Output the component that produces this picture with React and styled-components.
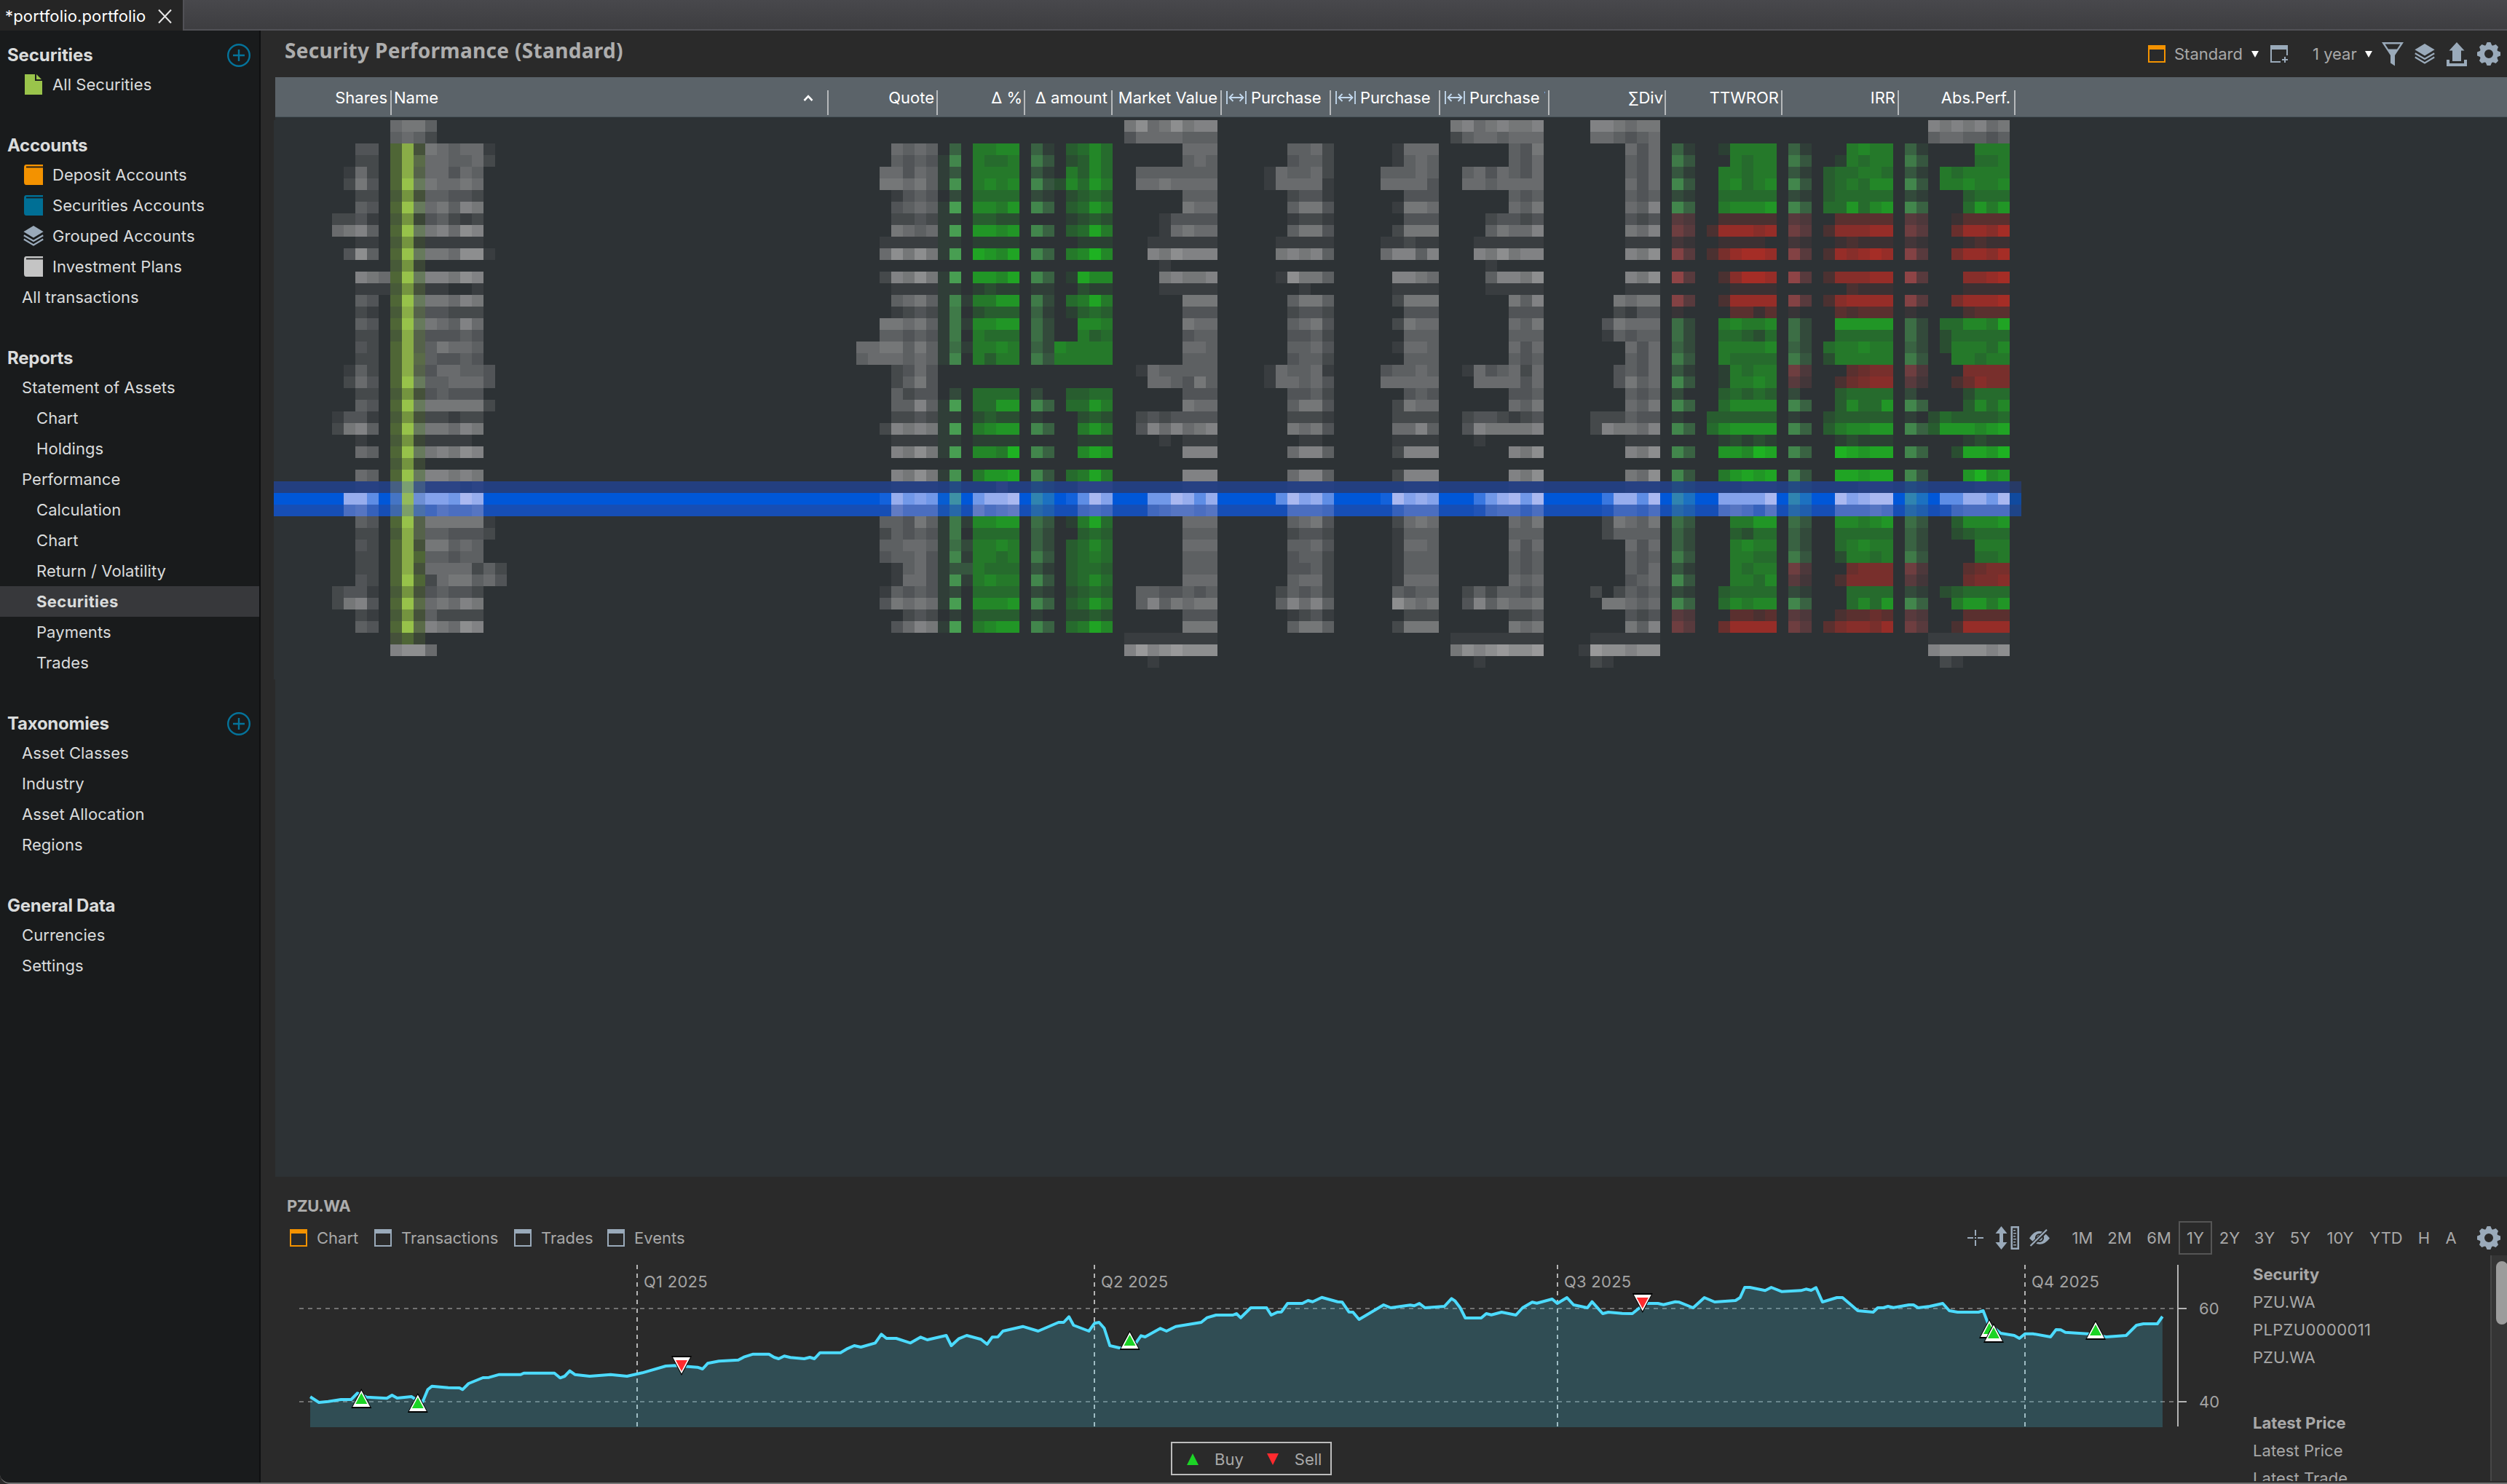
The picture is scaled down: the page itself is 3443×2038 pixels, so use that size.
import React from 'react';
import styled, { createGlobalStyle } from 'styled-components';

const GlobalStyle = createGlobalStyle`
  html, body { margin: 0; padding: 0; background: #2a2a2a; overflow: hidden; }
  * { box-sizing: border-box; }
`;

const slate = '#9aaaba';
const orange = '#f39200';

/* ---------- frame ---------- */
const Window = styled.div`
  width: 3443px;
  height: 2038px;
  display: flex;
  flex-direction: column;
  overflow: hidden;
  background: #2a2a2a;
  border-bottom: 2px solid #737373;
  border-bottom-left-radius: 14px;
  font-family: Inter, "Noto Sans", sans-serif;
  font-size: 22px;
  line-height: 1;
  color: #a8a8a8;
  white-space: nowrap;
`;
const TabBar = styled.div`
  height: 42px;
  flex: none;
  display: flex;
  background: linear-gradient(#48484c, #3d3d40);
`;
const TabFiller = styled.div`
  flex: 1;
  border-bottom: 2px solid #515156;
  border-left: 2px solid #515156;
`;
const Tab = styled.div`
  width: 251px;
  display: flex;
  align-items: center;
  padding: 2px 15px 0 7px;
  justify-content: space-between;
  letter-spacing: 0.15px;
  background: #252525;
  color: #fff;
`;
const Body = styled.div`
  flex: 1;
  min-height: 0;
  display: flex;
`;

/* ---------- sidebar ---------- */
const Sidebar = styled.nav`
  width: 358px;
  flex: none;
  background: #191b1c;
  border-right: 2px solid #0f1011;
  color: #dadcdc;
`;
const Heading = styled.div`
  height: ${(p) => (p.$first ? 53 : 82)}px;
  display: flex;
  align-items: flex-end;
  justify-content: space-between;
  padding: 0 11px 2px 10px;
  font-size: 24px;
  font-weight: 700;
  letter-spacing: ${(p) => (p.$first ? -0.1 : -0.25)}px;
  line-height: 34px;
  svg { display: block; }
`;
const Item = styled.div`
  height: 42px;
  display: flex;
  align-items: center;
  padding-left: ${(p) => (p.$icon ? 32 : p.$level === 2 ? 50 : 30)}px;
  background: ${(p) => (p.$active ? '#37383b' : 'transparent')};
  font-weight: ${(p) => (p.$active ? 700 : 400)};
  letter-spacing: ${(p) => (p.$active ? 0.4 : 0.06)}px;
`;
const ItemIcon = styled.span`
  width: 40px;
  height: 28px;
  svg { display: block; }
`;

/* ---------- main ---------- */
const Main = styled.main`
  flex: 1;
  min-width: 0;
  display: flex;
  flex-direction: column;
  padding-left: 20px;
`;
const TitleBar = styled.header`
  height: 64px;
  flex: none;
  display: flex;
  align-items: center;
  justify-content: space-between;
  padding-left: 13px;
`;
const Title = styled.h1`
  margin: 0 0 10px;
  font-family: "Noto Sans", sans-serif;
  font-size: 28px;
  font-weight: 700;
  line-height: 40px;
  letter-spacing: 0.32px;
  color: #adadad;
`;
const Tools = styled.div`
  display: flex;
  align-items: center;
  height: 64px;
  padding-right: 9px;
  svg { display: block; flex: none; }
`;
const Slot = styled.div`
  width: ${(p) => p.$w}px;
  flex: none;
  display: flex;
  align-items: center;
  justify-content: flex-start;
`;
const TableHead = styled.div`
  height: 55px;
  flex: none;
  display: flex;
  background: #5b6369;
  border-bottom: 1px solid #49545a;
  color: #fff;
`;
const Th = styled.div`
  width: ${(p) => p.$w}px;
  height: 34px;
  margin-top: 18px;
  flex: none;
  display: flex;
  justify-content: ${(p) => (p.$sorted ? 'space-between' : 'flex-end')};
  padding: ${(p) => (p.$sorted ? '0 19px 0 3px' : `0 ${p.$end || 3}px 0 6px`)};
  border-right: 2px solid #b6b9bb;
  line-height: 21px;
  svg { flex: none; margin-top: ${(p) => (p.$sorted ? 6 : 0)}px; }
`;
const ThText = styled.span`
  flex: none;
`;
const ThClipped = styled.span`
  flex: 1;
  min-width: 0;
  height: 32px;
  padding-left: 6px;
  margin-right: 1px;
  overflow: hidden;
  letter-spacing: -0.1px;
`;
const TableBody = styled.div`
  height: 1455px;
  flex: none;
  padding-top: 4px;
  background: #2d3235;
`;
const Mosaic = styled.div`
  width: 2402px;
  height: 768px;
  margin-left: -2px;
  background: #2d3235;
`;
const MosaicRow = styled.div`
  display: flex;
  height: 16px;
`;
const Run = styled.span`
  flex: none;
  height: 16px;
`;

/* ---------- lower pane ---------- */
const PaneTitle = styled.div`
  height: 60px;
  flex: none;
  padding: 29px 0 0 16px;
  font-weight: 700;
  letter-spacing: -0.3px;
  color: #adadad;
`;
const PaneBar = styled.div`
  height: 48px;
  flex: none;
  display: flex;
  justify-content: space-between;
  align-items: center;
  padding-left: 20px;
`;
const ViewTabs = styled.div`
  display: flex;
  align-items: center;
  svg { display: block; flex: none; margin-right: 13px; }
`;
const Range = styled.div`
  width: ${(p) => p.$w}px;
  height: 46px;
  flex: none;
  display: flex;
  align-items: center;
  justify-content: center;
  border: 2px solid ${(p) => (p.$active ? '#555' : 'transparent')};
`;
const PaneBody = styled.div`
  flex: 1;
  min-height: 0;
  display: flex;
`;
const ChartArea = styled.div`
  width: 2696px;
  flex: none;
  display: flex;
  flex-direction: column;
  svg { display: block; }
`;
const Legend = styled.div`
  width: 221px;
  height: 46px;
  margin: 10px 0 0 1230px;
  display: flex;
  align-items: center;
  padding: 2px 0 0 20px;
  border: 2px solid #bcbcbc;
  span:nth-of-type(1) { margin: 0 32px 0 22px; }
  span:nth-of-type(2) { margin-left: 22px; }
`;
const Info = styled.div`
  flex: 1;
  padding: 7px 0 0 20px;
  overflow: hidden;
  height: 310px;
`;
const InfoRow = styled.div`
  height: ${(p) => p.$h || 38}px;
  line-height: 38px;
  font-weight: ${(p) => (p.$bold ? 700 : 400)};
  letter-spacing: ${(p) => p.$track || 0.05}px;
`;
const ScrollTrack = styled.div`
  width: 23px;
  height: 310px;
  padding: 8px 0 0 6px;
  background: #353535;
  border-left: 2px solid #474747;
  overflow: hidden;
`;
const ScrollThumb = styled.div`
  width: 16px;
  height: 87px;
  border-radius: 8px;
  background: #9c9c9c;
`;

/* ---------- icons ---------- */
const PlusCircle = () => (
  <svg width="34" height="34" viewBox="0 0 34 34" fill="none" stroke="#05739a" strokeWidth="2.4">
    <circle cx="17" cy="17" r="14.8" />
    <path d="M17 9v16M9 17h16" />
  </svg>
);
const FileIcon = () => (
  <svg width="28" height="28" viewBox="0 0 28 28" fill="#9ac44b">
    <path d="M2 0h14v9h10v19H2z" />
    <path d="M18 0l7 7h-7z" />
  </svg>
);
const BookIcon = ({ color }) => (
  <svg width="28" height="28" viewBox="0 0 28 28">
    <path d="M4 0h23v28H4q-3 0-3-4V4q0-4 3-4z" fill={color} />
    <path d="M4 3.400h23" stroke="#191b1c" strokeWidth="1.8" />
  </svg>
);
const LayersIcon = () => (
  <svg width="28" height="28" viewBox="0 0 28 28" fill="none" stroke={slate} strokeWidth="2.3">
    <path d="M14 0l13.600 8.200L14 16.400.400 8.200z" fill={slate} stroke="none" />
    <path d="M.800 13.200L14 21l13.200-7.800M.800 18.600L14 26.400l13.200-7.800" />
  </svg>
);
const CloseIcon = () => (
  <svg width="19" height="21" viewBox="0 0 19 21" stroke="#e6e6e6" strokeWidth="2">
    <path d="M1 1.500l17 18M18 1.500l-17 18" />
  </svg>
);
const PaneIcon = ({ color = slate }) => (
  <svg width="24" height="24" viewBox="0 0 24 24">
    <path d="M0 0h24v24H0zM2 6v16h20V6z" fill={color} fillRule="evenodd" />
  </svg>
);
const PaneAddIcon = () => (
  <svg width="25" height="25" viewBox="0 0 25 25" fill={slate}>
    <path d="M0 0h24v14h-2V6H2v16h12v2H0z" />
    <path d="M19 16h2v3h3v2h-3v3h-2v-3h-3v-2h3z" />
  </svg>
);
const Caret = () => (
  <svg width="10" height="9" viewBox="0 0 10 9"><path d="M0 0h10L5 9z" fill="#fff" /></svg>
);
const FunnelIcon = () => (
  <svg width="30" height="33" viewBox="0 0 30 33">
    <path d="M0 0h30L18 18v14.500l-6-4V18zM4.500 2.600L9 9.500h12l4.500-6.900z" fill={slate} fillRule="evenodd" />
  </svg>
);
const ExportIcon = () => (
  <svg width="28" height="33" viewBox="0 0 28 33" fill={slate}>
    <path d="M14 0l10.500 11.500H20V26H8V11.500H3.500z" />
    <path d="M0 24h4v5h20v-5h4v9H0z" />
  </svg>
);
const teeth = [0, 45, 90, 135, 180, 225, 270, 315];
const GearIcon = () => (
  <svg width="32" height="32" viewBox="-16 -16 32 32">
    <circle r="9.300" fill="none" stroke={slate} strokeWidth="6.600" />
    {teeth.map((a) => (
      <path key={a} d="M-4.600 -11L-2.400 -16H2.400L4.600 -11z" fill={slate} transform={`rotate(${a})`} />
    ))}
  </svg>
);
const CrossIcon = () => (
  <svg width="22" height="22" viewBox="0 0 22 22" stroke={slate} strokeWidth="2">
    <path d="M11 0v8M11 14v8M0 11h8M14 11h8M10 11h2" />
  </svg>
);
const RulerIcon = () => (
  <svg width="33" height="32" viewBox="0 0 33 32" fill={slate}>
    <path d="M8.500 0l8 10H11v12h5.500l-8 10-8-10H6V10H.500z" />
    <path d="M21.500 0H33v32H21.500zM24 2.500v27h6.500v-27z" fillRule="evenodd" />
    <path d="M25 5h3v1.500h-3zM25 9h4v1.500h-4zM25 13h3v1.500h-3zM25 17h4v1.500h-4zM25 21h3v1.500h-3zM25 25h4v1.500h-4z" />
  </svg>
);
const EyeOffIcon = () => (
  <svg width="30" height="24" viewBox="0 0 30 24">
    <path d="M1 12.500Q14 -7 29 12.500Q16 29 1 12.500z" fill={slate} />
    <circle cx="15" cy="12" r="5" fill="none" stroke="#2a2a2a" strokeWidth="2.200" />
    <path d="M2.500 23.500L25.500 1" stroke="#2a2a2a" strokeWidth="5.500" />
    <path d="M2.500 23L25 .800" stroke={slate} strokeWidth="2.200" />
  </svg>
);
const SpanIcon = () => (
  <svg width="28" height="20" viewBox="0 0 28 20" fill="none" stroke="#c3d9ee" strokeWidth="1.800">
    <path d="M1 1v18M27 1v18M4.500 10h19M9.500 5l-5 5 5 5M18.500 5l5 5-5 5" />
  </svg>
);
const SortIcon = () => (
  <svg width="14" height="9" viewBox="0 0 14 9" fill="none" stroke="#fff" strokeWidth="2.600">
    <path d="M1.500 8L7 2.200 12.500 8" />
  </svg>
);

/* ---------- redacted table cells ---------- */
const BASE = [45, 50, 53];
const TONES = {
  n: [153, 153, 154],
  g: [30, 178, 34],
  r: [180, 44, 36],
  a: [72, 158, 82],
  b: [142, 68, 70],
};
const SELECTED = {
  31: { bg: [35, 63, 128], n: [75, 85, 155], a: [40, 115, 140] },
  32: { bg: [0, 87, 216], n: [170, 184, 240], a: [62, 145, 165] },
  33: { bg: [22, 78, 181], n: [118, 136, 200], a: [52, 125, 158] },
};
const STRIP = {
  p: '#4f6636', q: '#475a38', s: '#97c24a', u: '#89ad47', t: '#74943f', w: '#677a5c',
  x: '#3b4636', y: '#55624a', z: '#45513a', v: '#5a6b48',
  A: '#465f82', B: '#7a9f72', C: '#405a85', D: '#4575c5', E: '#93ba5c', F: '#6d8fd4',
  G: '#3f68aa', H: '#7c9f68', I: '#4a70aa',
};
const split = (text) => text.trim().split(/\s+/);

const arrowRows = split(`00 00 41 63 31 73 21 74 43 64 21 84 00 94 00 84 10 52 52 42 63 31 73 20 74 10 74 00
  74 00 73 21 74 53 53 42 42 63 31 73 21 74 43 64 00 00 00`);
const patch = (rows, changes) => rows.map((row, i) => changes[i] || row);
const arrowAmountRows = patch(arrowRows, {
  8: '00', 9: '74', 10: '00', 11: '74', 13: '74', 14: '11', 15: '62', 16: '41', 21: '00', 22: '00',
  42: '10', 43: '74',
});
const arrowIrrRows = patch(arrowRows, { 21: '63', 22: '42', 38: '63', 39: '42' });

const sections = [
  { at: 5, rows: split(`00000 00000 00330 00220 01520 02630 00220 00430 22310 56740 00110 03840 00000 00765 00111 00430
    00210 00430 00220 00320 00220 01420 02530 00220 00430 13310 26740 00100 00540 00000 00540 00110 08850 05630 00430
    00220 00320 00220 00220 00320 23310 26730 00210 00430 00000 00000 00000`) },
  { at: 10, rows: split(`566 454 puz puv puy psw qtz psw qtx psw qtx psw qtx psw qtz psw quy psw quy puy puv puy psw qtz
    psw qtz psw qtx psw qtx psw ABC DEF GHI psy quy puz pup puz psp qtz psv qtz psv zpx 788 000`) },
  { at: 13, rows: split(`4000000 2000000 6545510 5544520 5535400 6556500 4433200 5647600 3421200 6758700 1111100 6658810
    0000000 7768700 1100100 6657600 3322200 6547500 3334300 4655400 4334300 3554430 4455530 3433300 6666620 2212200
    6657600 1111000 6768700 0000000 7767600 2221200 7769800 4655600 6666610 4433320 6645400 4434400 5555242 2566453
    3433200 5657600 4222200 7658700 0000000 5000000 0000000`) },
  { at: 50, rows: split(`0 0 0005454 0004343 0055354 0066564 0001343 0003454 0002232 0006545 0011111 0058686 0 0027686
    0001111 0004564 0001232 0066564 0044343 5566464 4555454 0002353 0002463 0004233 0004474 0002232 0027676 0001111
    0007686 0 0007686 0001111 0018676 0007555 0044364 0024343 0044554 0034453 0001453 0001553 0014343 0036565 0000232
    0003576 0 0 0`) },
  { at: 57, tone: 'a', rows: split(`000 000 040 170 130 180 020 190 110 190 110 190 000 190 110 171 160 161 160 151 170
    000 000 020 190 110 190 110 190 000 180 020 190 150 161 160 152 171 133 181 120 190 010 190 000 000 000`) },
  { at: 60, tone: 'g', rows: split(`0 0 5566 5445 5555 5656 4444 6657 3322 7767 1111 8768 0 7768 1211 5577 2333 6677
    5444 5565 5355 0 0 4444 4477 2322 5677 1111 6659 0 5778 0020 6889 7567 6677 4444 5565 5545 5444 5655 4444 6667
    3333 5677 0 0 0`) },
  { at: 65, tone: 'a', rows: arrowAmountRows },
  { at: 67, tone: 'g', rows: split(`0 0 03464 02364 05364 26475 02343 03475 01232 03485 00111 05696 0 01866 00211 04585
    01343 00665 00534 65555 55555 0 0 03344 04475 00232 00575 00111 00687 0 04585 00222 01597 00454 01584 00343 03464
    03454 03443 03464 02343 03475 02232 04586 0 0 0`) },
  { at: 73, rows: split(`68568677 35555444 00000555 00000454 04444444 05565555 00000444 00000655 00013333 00015655
    00111111 00768777 00010000 00067667 00011111 00000666 00000333 00000655 00000344 00000554 00000444 01544444
    00554364 00000333 00000655 02323333 03757567 00010111 00000777 0 00000777 00000111 00669858 00456656 00000555
    00000444 00000555 00000444 00000444 00000555 04433434 04746566 00000333 00000666 11111111 79789888 00100000`) },
  { at: 85, rows: split(`0 0 004452 003442 154452 155551 002331 004663 001221 004663 011111 067674 0 018664 000100
    004664 002332 004563 003342 004453 003442 154451 155453 003342 004663 002221 006563 000110 005774 0 005774 001111
    059785 005554 004563 002332 004453 003442 003342 004552 024342 047574 001231 004664 0 0 0`) },
  { at: 95, rows: split(`0 0 01555 01454 44454 55553 00333 01665 00333 02666 11211 57747 0 07765 01111 02666 00333
    02655 00444 01554 00444 34454 55555 00343 02655 02222 05574 01111 02777 0 02777 00111 19787 03555 02565 01444
    01554 01444 01444 01555 04344 08656 00222 02666 0 0 0`) },
  { at: 101, rows: split(`67567667 24554555 00000436 00000435 04535435 05545555 00000434 00000546 00023323 00046557
    00111111 00768677 00010000 00047768 00011111 00000647 00000333 00000546 00000444 00000535 00000434 01534525
    00555535 00000334 00000546 02332123 03766667 00100000 00000768 0 00000768 00000111 00368969 00145535 00000546
    00000444 00000535 00000434 00000434 00000545 02424434 03746556 00000223 00000656 11111111 68789889 00100000`) },
  { at: 112, rows: split(`0776566 0554345 0000535 0000435 0000435 0000535 0000434 0000547 0000323 0000657 0000111
    0000768 0 0000768 0000111 0006566 0002133 0036555 0014344 0000535 0000435 0003435 0003645 0000434 0000546 0222433
    0276657 0000111 0000768 0 0000658 0000111 0038859 0014435 0026546 0024444 0000535 0000434 0000435 0000345 0202434
    0066545 0000323 0000647 0111111 1988788 0210000`) },
  { at: 120, tone: 'a', rows: arrowRows },
  { at: 123, tone: 'g', rows: split(`0 0 015555 005455 055455 056456 044444 056667 022222 277767 011110 257887 0 026887
    001111 027777 003313 056556 044324 055556 054444 015455 015565 034343 046666 333333 467777 012121 077698 0 057878
    000111 077779 056536 005577 003244 005655 005544 005455 005546 034444 046566 003323 047777 0 0 0`) },
  { at: 130, tone: 'a', rows: arrowIrrRows },
  { at: 133, tone: 'g', rows: split(`0 0 005655 015455 344554 345466 344444 447467 033333 266677 012111 276787 0 266677
    002111 267777 032333 077777 044444 455655 255555 003455 024566 034444 036447 233333 356677 012111 098788 0 088788
    000111 097899 055565 066567 044444 045655 025545 004555 025555 004444 004647 023343 356657 0 0 0`) },
  { at: 140, tone: 'a', rows: arrowIrrRows },
  { at: 142, tone: 'g', rows: split(`7676756 4554434 0000555 0000445 0545555 0556556 0003444 0004757 0013333 0047768
    0001211 0057768 0 0006678 0001111 0057778 0002333 0446658 0244444 0255546 0055455 0005555 0024655 0002444 0003646
    2433334 3777678 0001211 0028879 0 0007967 0000111 0558869 0145555 0036667 0023444 0000555 0000445 0003455 0004556
    0234444 0057757 0003333 0027777 1111111 7888878 0210000`) },
];

/* rows drawn in red in every performance column, and those red only in IRR and Abs.Perf. */
const LOSS_ALWAYS = [8, 9, 10, 11, 12, 13, 14, 15, 16, 42, 43];
const LOSS_LATE = [21, 22, 38, 39];
const toneOf = (section, row) => {
  const t = section.tone || 'n';
  if (t === 'n') return 'n';
  if (t === 'g' && (row < 2 || row > 43 || SELECTED[row])) return 'n';
  if (section.at < 120 || SELECTED[row]) return t;
  const loss = LOSS_ALWAYS.includes(row) || (section.at >= 130 && LOSS_LATE.includes(row));
  return loss ? (t === 'g' ? 'r' : 'b') : t;
};
const rgb = (c) => `rgb(${c.map(Math.round).join(',')})`;
const blend = (from, to, k) => from.map((v, i) => v + (to[i] - v) * k);

const mosaicRows = Array.from({ length: 47 }, (_, row) => {
  const sel = SELECTED[row];
  const bg = sel ? sel.bg : BASE;
  const cells = Array(150).fill(rgb(bg));
  sections.forEach((section) => {
    const text = section.rows[row] || '';
    if (text === '0') return;
    const tone = toneOf(section, row);
    const target = (sel && sel[tone]) || TONES[tone];
    [...text].forEach((ch, i) => {
      if (ch === '0') return;
      cells[section.at + i] = /\d/.test(ch) ? rgb(blend(bg, target, Number(ch) / 9)) : STRIP[ch];
    });
  });
  if (sel) cells[149] = rgb(blend(BASE, sel.bg, 0.65));
  const runs = [];
  cells.forEach((color) => {
    const last = runs[runs.length - 1];
    if (last && last.color === color) last.n += 1;
    else runs.push({ color, n: 1 });
  });
  return runs;
});

/* ---------- price chart ---------- */
const traces = [
  { x: -8, s: 1.4255, d: `80,955 97,978 115,974 140,966 160,966 172,940 180,945 190,956 230,961 240,948 250,960 278,954 290,970
    300,975 310,925 318,911 350,917 372,918 378,925 390,900 418,876 430,875 450,863 492,863 498,857 558,857 569,877
    578,870 588,848 598,863 627,870 668,863 700,870 719,861 730,856 776,828 795,826 820,830 838,833 848,840 858,817
    880,808 918,803 930,790 947,779 978,779 988,792 997,798 1008,787 1020,793 1047,798 1058,792 1067,798 1078,773
    1118,773 1130,758 1145,744 1158,750 1186,733 1198,697 1208,714 1227,714 1255,733 1275,709 1288,720 1325,702
    1335,744 1350,715 1365,702 1393,718 1405,738 1415,709 1426,708 1436,684 1475,665 1505,684 1545,648 1555,648` },
  { x: 1022, s: 1.4255, d: `97,625 106,660 136,684 147,652 156,648 166,672 177,744 200,755 215,745 228,733 238,703 246,708
    276,673 288,684 306,665 356,648 367,629 385,618 418,618 425,612 433,629 453,588 484,588 493,618 505,606 513,605
    525,570 554,570 565,558 574,563 592,545 623,563 632,565 645,605 653,606 665,636 713,576 727,588 765,577 773,580
    783,570 794,588 832,582 846,550 853,560 863,588 873,630 904,630 914,612 924,617 944,606 972,618 985,588 1004,565
    1013,569 1043,552 1053,570 1072,546 1085,576 1112,588 1121,563 1142,612 1153,606 1180,611 1200,612 1212,592
    1225,570 1250,570 1261,575 1284,563 1292,565 1319,588 1341,546 1361,564 1402,558 1411,546 1420,504 1430,504
    1460,517 1472,504 1492,521 1530,517 1540,511 1550,516` },
  { x: 2065, s: 1.568, d: `80,505 94,564 125,546 137,546 170,600 203,606 213,588 225,588 235,582 247,587 280,576 290,576
    300,588 325,582 353,570 367,600 385,606 430,606 440,600 450,650 478,693 507,702 518,714 530,695 547,695 585,708
    597,678 607,679 617,689 665,695 705,708 748,702 770,660 785,654 815,654 826,624` },
];
const points = traces.flatMap(({ x, s, d }) =>
  split(d).map((pair) => {
    const [px, py] = pair.split(',').map(Number);
    return `${(x + px / s).toFixed(1)},${(py / 3 - 124).toFixed(1)}`;
  }));
const quarters = [[497, 'Q1 2025'], [1125, 'Q2 2025'], [1761, 'Q3 2025'], [2403, 'Q4 2025']];
const trades = [
  ['buy', 118.3, 183], ['buy', 195.8, 189], ['sell', 558, 138], ['buy', 1173.5, 103],
  ['sell', 1877.8, 52], ['buy', 2354, 87], ['buy', 2360, 93], ['buy', 2500, 89],
];
const Marker = ({ kind, x, y }) => (
  <g transform={`translate(${x} ${y})${kind === 'sell' ? ' translate(0 27) scale(1 -1)' : ''}`}>
    <path d="M0 0L14 27H-14z" fill="#000" />
    <path d="M0 2.500L12 25H-12z" fill="#fff" />
    <path d="M0 6L8 21H-8z" fill={kind === 'sell' ? '#ff2a2e' : '#1cd426'} />
  </g>
);
const PriceChart = () => (
  <svg width="2696" height="246" viewBox="0 0 2696 246" fontFamily="Inter, sans-serif" fontSize="22" fill="#a4a4a4">
    <g stroke="#727272" strokeWidth="2" strokeDasharray="6 6">
      <path d="M33 73H2612M33 201H2612" />
    </g>
    {quarters.map(([x, label]) => (
      <g key={label}>
        <path d={`M${x} 13V235`} stroke="#b4b4b4" strokeWidth="2" strokeDasharray="6 6" />
        <text x={x + 9} y="44" letterSpacing="0.25">{label}</text>
      </g>
    ))}
    <polygon points={`48,236 ${points.join(' ')} 2592,236`} fill="rgb(77,219,255)" fillOpacity="0.2" />
    <polyline points={points.join(' ')} fill="none" stroke="#4cdbff" strokeWidth="4" strokeLinejoin="round" />
    {trades.map(([kind, x, y]) => <Marker key={x} kind={kind} x={x} y={y} />)}
    <path d="M2613 13V235M2614 73H2625M2614 201H2625" stroke="#b4b4b4" strokeWidth="2" />
    <text x="2642" y="81">60</text>
    <text x="2642" y="209">40</text>
  </svg>
);

/* ---------- content ---------- */
const nav = [
  { title: 'Securities', plus: true, items: [{ t: 'All Securities', icon: <FileIcon /> }] },
  { title: 'Accounts', items: [
    { t: 'Deposit Accounts', icon: <BookIcon color="#f39200" /> },
    { t: 'Securities Accounts', icon: <BookIcon color="#006f95" /> },
    { t: 'Grouped Accounts', icon: <LayersIcon /> },
    { t: 'Investment Plans', icon: <BookIcon color="#c4c4c4" /> },
    { t: 'All transactions' },
  ] },
  { title: 'Reports', items: [
    { t: 'Statement of Assets' }, { t: 'Chart', level: 2 }, { t: 'Holdings', level: 2 },
    { t: 'Performance' }, { t: 'Calculation', level: 2 }, { t: 'Chart', level: 2 },
    { t: 'Return / Volatility', level: 2 }, { t: 'Securities', level: 2, active: true },
    { t: 'Payments', level: 2 }, { t: 'Trades', level: 2 },
  ] },
  { title: 'Taxonomies', plus: true, items: [
    { t: 'Asset Classes' }, { t: 'Industry' }, { t: 'Asset Allocation' }, { t: 'Regions' },
  ] },
  { title: 'General Data', items: [{ t: 'Currencies' }, { t: 'Settings' }] },
];
const columns = [
  { t: 'Shares', w: 160, end: 4 }, { t: 'Name', w: 600, sorted: true }, { t: 'Quote', w: 150 },
  { t: 'Δ %', w: 120, end: 2 }, { t: 'Δ amount', w: 120, end: 5 }, { t: 'Market Value', w: 150, end: 4 },
  { t: 'Purchase Price', w: 150, span: true }, { t: 'Purchase Price', w: 150, span: true },
  { t: 'Purchase Value', w: 150, span: true }, { t: '∑Div', w: 160, end: 2 }, { t: 'TTWROR', w: 160 },
  { t: 'IRR', w: 160 }, { t: 'Abs.Perf.', w: 160, end: 5 },
];
const ranges = [['1M', 48], ['2M', 54], ['6M', 54], ['1Y', 46], ['2Y', 48], ['3Y', 48], ['5Y', 50],
  ['10Y', 60], ['YTD', 66], ['H', 38], ['A', 36]];

export default function App() {
  return (
    <>
      <GlobalStyle />
      <Window>
        <TabBar>
          <Tab><span>*portfolio.portfolio</span><CloseIcon /></Tab>
          <TabFiller />
        </TabBar>
        <Body>
          <Sidebar>
            {nav.map((group, i) => (
              <React.Fragment key={group.title}>
                <Heading $first={i === 0}><span>{group.title}</span>{group.plus && <PlusCircle />}</Heading>
                {group.items.map((item, k) => (
                  <Item key={k} $icon={!!item.icon} $level={item.level} $active={item.active}>
                    {item.icon && <ItemIcon>{item.icon}</ItemIcon>}
                    {item.t}
                  </Item>
                ))}
              </React.Fragment>
            ))}
          </Sidebar>
          <Main>
            <TitleBar>
              <Title>Security Performance (Standard)</Title>
              <Tools>
                <Slot $w={36}><PaneIcon color={orange} /></Slot>
                <Slot $w={106}>Standard</Slot>
                <Slot $w={26}><Caret /></Slot>
                <Slot $w={58}><PaneAddIcon /></Slot>
                <Slot $w={72}>1 year</Slot>
                <Slot $w={23}><Caret /></Slot>
                <Slot $w={45}><FunnelIcon /></Slot>
                <Slot $w={44}><LayersIcon /></Slot>
                <Slot $w={42}><ExportIcon /></Slot>
                <GearIcon />
              </Tools>
            </TitleBar>
            <TableHead>
              {columns.map((c, i) => (
                <Th key={i} $w={c.w} $sorted={c.sorted} $end={c.end}>
                  {c.span && <SpanIcon />}
                  {c.span ? <ThClipped>{c.t}</ThClipped> : <ThText>{c.t}</ThText>}
                  {c.sorted && <SortIcon />}
                </Th>
              ))}
            </TableHead>
            <TableBody>
              <Mosaic>
                {mosaicRows.map((runs, y) => (
                  <MosaicRow key={y}>
                    {runs.map((run, x) => (
                      <Run key={x} style={{ width: run.n * 16, background: run.color }} />
                    ))}
                  </MosaicRow>
                ))}
              </Mosaic>
            </TableBody>
            <PaneTitle>PZU.WA</PaneTitle>
            <PaneBar>
              <ViewTabs>
                <Slot $w={116}><PaneIcon color={orange} />Chart</Slot>
                <Slot $w={192}><PaneIcon />Transactions</Slot>
                <Slot $w={128}><PaneIcon />Trades</Slot>
                <Slot $w={110}><PaneIcon />Events</Slot>
              </ViewTabs>
              <Tools>
                <Slot $w={38}><CrossIcon /></Slot>
                <Slot $w={46}><RulerIcon /></Slot>
                <Slot $w={50}><EyeOffIcon /></Slot>
                {ranges.map(([label, w]) => <Range key={label} $w={w} $active={label === '1Y'}>{label}</Range>)}
                <Slot $w={18} />
                <GearIcon />
              </Tools>
            </PaneBar>
            <PaneBody>
              <ChartArea>
                <PriceChart />
                <Legend>
                  <svg width="16" height="16"><path d="M8 0l8 16H0z" fill="#1cd426" /></svg>
                  <span>Buy</span>
                  <svg width="16" height="16"><path d="M0 0h16L8 16z" fill="#ff2a2e" /></svg>
                  <span>Sell</span>
                </Legend>
              </ChartArea>
              <Info>
                <InfoRow $bold>Security</InfoRow>
                <InfoRow>PZU.WA</InfoRow>
                <InfoRow $track={0.35}>PLPZU0000011</InfoRow>
                <InfoRow $h={90}>PZU.WA</InfoRow>
                <InfoRow $bold>Latest Price</InfoRow>
                <InfoRow>Latest Price</InfoRow>
                <InfoRow>Latest Trade</InfoRow>
              </Info>
              <ScrollTrack><ScrollThumb /></ScrollTrack>
            </PaneBody>
          </Main>
        </Body>
      </Window>
    </>
  );
}
